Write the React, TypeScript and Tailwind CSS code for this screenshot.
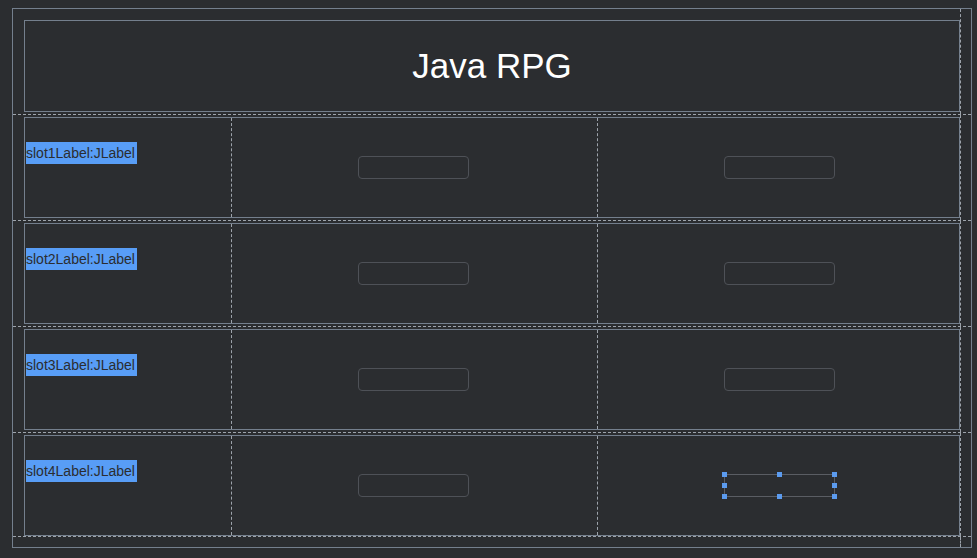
import React from "react";

// Designer preview of a GridBag form: header title + four slot rows
const slots = ["slot1Label:JLabel", "slot2Label:JLabel", "slot3Label:JLabel", "slot4Label:JLabel"];

const Field = () => (
  <div className="w-[111px] h-[23px] rounded-[4px] border border-[#4e5157]" />
);

// Selected component: square box with eight resize handles
const SelectedField = () => {
  const handle = "absolute w-[5px] h-[5px] bg-[#5b9bef]";
  return (
    <div className="relative w-[111px] h-[23px] border border-[#5a5d63]">
      <span className={`${handle} -left-[3px] -top-[3px]`} />
      <span className={`${handle} left-[52px] -top-[3px]`} />
      <span className={`${handle} -right-[3px] -top-[3px]`} />
      <span className={`${handle} -left-[3px] top-[8px]`} />
      <span className={`${handle} -right-[3px] top-[8px]`} />
      <span className={`${handle} -left-[3px] -bottom-[3px]`} />
      <span className={`${handle} left-[52px] -bottom-[3px]`} />
      <span className={`${handle} -right-[3px] -bottom-[3px]`} />
    </div>
  );
};

const SlotRow = ({ label, last }: { label: string; last: boolean }) => (
  <div className={`flex border-b border-dashed border-[#9da3ab] ${last ? "h-[104px]" : "h-[106px]"}`}>
    <div className={`flex-1 pl-[11px] pt-[2px] ${last ? "pb-0" : "pb-[2px]"}`}>
      <div className="flex h-full border border-[#747f8d]">
        <div className="w-[207px] border-r border-dashed border-[#9da3ab] pl-[1px] pt-[22px]">
          <span className="inline-block h-[22px] leading-[22px] pr-[2px] bg-[#589df6] text-[14px] text-[#2b2d30] font-['Liberation_Sans',Arial,sans-serif]">
            {label}
          </span>
        </div>
        <div className="w-[366px] border-r border-dashed border-[#9da3ab] flex items-center justify-center pr-[2px]">
          <Field />
        </div>
        <div className="flex-1 flex items-center justify-center pl-[2px]">
          {last ? <SelectedField /> : <Field />}
        </div>
      </div>
    </div>
    <div className="w-[11px] border-l border-dashed border-[#9da3ab]" />
  </div>
);

export default function App() {
  return (
    <div className="w-[977px] h-[558px] bg-[#2b2d30] pt-[8px] pl-[12px] overflow-hidden">
      <div className="w-[960px] h-[540px] border border-[#747f8d] flex flex-col">
        <div className="flex h-[106px] border-b border-dashed border-[#9da3ab]">
          <div className="flex-1 pl-[11px] pt-[11px] pb-[2px]">
            <div className="h-full border border-[#747f8d] flex items-center justify-center">
              <h1 className="text-[35px] text-white font-['Liberation_Sans',Arial,sans-serif] leading-none pb-[2px]">
                Java RPG
              </h1>
            </div>
          </div>
          <div className="w-[11px] border-l border-dashed border-[#9da3ab]" />
        </div>
        {slots.map((s, i) => (
          <SlotRow key={s} label={s} last={i === slots.length - 1} />
        ))}
        <div className="flex flex-1">
          <div className="flex-1" />
          <div className="w-[11px] border-l border-dashed border-[#9da3ab]" />
        </div>
      </div>
    </div>
  );
}
